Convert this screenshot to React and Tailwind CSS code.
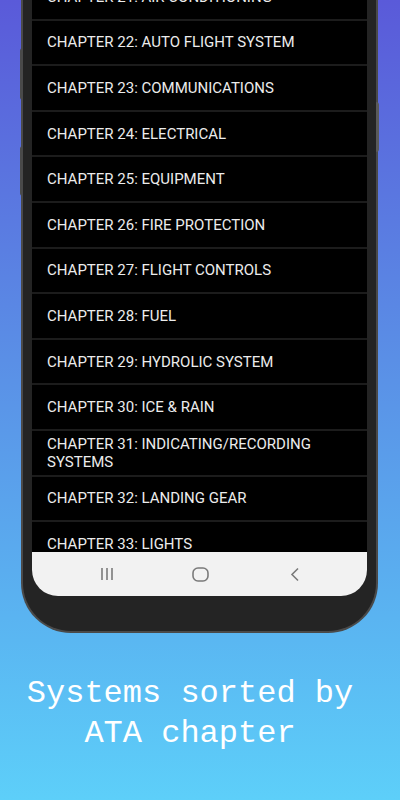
import React from 'react'

const chapters = [
  'CHAPTER 21: AIR CONDITIONING',
  'CHAPTER 22: AUTO FLIGHT SYSTEM',
  'CHAPTER 23: COMMUNICATIONS',
  'CHAPTER 24: ELECTRICAL',
  'CHAPTER 25: EQUIPMENT',
  'CHAPTER 26: FIRE PROTECTION',
  'CHAPTER 27: FLIGHT CONTROLS',
  'CHAPTER 28: FUEL',
  'CHAPTER 29: HYDROLIC SYSTEM',
  'CHAPTER 30: ICE & RAIN',
  'CHAPTER 31: INDICATING/RECORDING SYSTEMS',
  'CHAPTER 32: LANDING GEAR',
  'CHAPTER 33: LIGHTS',
]

function NavBar() {
  return (
    <div className="h-[44px] shrink-0 bg-[#f2f2f2] flex items-center">
      <div className="w-[67px]" />
      <svg width="14" height="14" viewBox="0 0 14 14" className="ml-[1px]">
        <path d="M2 1v12M7 1v12M12 1v12" stroke="#7a7a7a" strokeWidth="1.6" />
      </svg>
      <div className="w-[78px]" />
      <svg width="17" height="15" viewBox="0 0 17 15">
        <rect x="1" y="1" width="15" height="13" rx="5" fill="none" stroke="#7a7a7a" strokeWidth="1.6" />
      </svg>
      <div className="w-[81px]" />
      <svg width="10" height="15" viewBox="0 0 10 15">
        <path d="M8 1.5L2 7.5l6 6" fill="none" stroke="#7a7a7a" strokeWidth="1.6" />
      </svg>
    </div>
  )
}

export default function App() {
  return (
    <div className="w-[400px] h-[800px] overflow-hidden relative bg-[linear-gradient(180deg,#5a5ad9_0%,#5a8fe6_45%,#5ab7f2_80%,#5dcff9_100%)]">
      {/* side buttons */}
      <div className="absolute left-[20px] top-[48px] w-[3px] h-[52px] bg-[#4a4a4a] rounded-l-sm" />
      <div className="absolute left-[20px] top-[146px] w-[3px] h-[50px] bg-[#4a4a4a] rounded-l-sm" />
      <div className="absolute left-[376px] top-[102px] w-[3px] h-[50px] bg-[#5a5a5a] rounded-r-sm" />

      <div className="ml-[21px] w-[357px] h-[633px] bg-[#4a4a4a] rounded-b-[50px] px-[2px] pb-[2px]">
        <div className="h-full bg-[#242424] rounded-b-[48px] px-[9px] pb-[35px] flex flex-col">
          <div className="flex-1 bg-black rounded-b-[26px] overflow-hidden flex flex-col">
            <div className="flex-1 overflow-hidden">
              <div className="mt-[-27px]">
                {chapters.map(c => (
                  <div key={c} className="h-[45.6px] border-t-2 border-[#1c1c1c] flex items-center pl-[15px] pr-[20px] text-[15px] leading-[18px] text-[#ececec] font-['Roboto',sans-serif]">
                    {c}
                  </div>
                ))}
              </div>
            </div>
            <NavBar />
          </div>
        </div>
      </div>

      <div className="mt-[41px] pr-[20px] text-center text-white text-[32px] leading-[40px] font-['Liberation_Mono',monospace]">
        Systems sorted by<br />ATA chapter
      </div>
    </div>
  )
}
